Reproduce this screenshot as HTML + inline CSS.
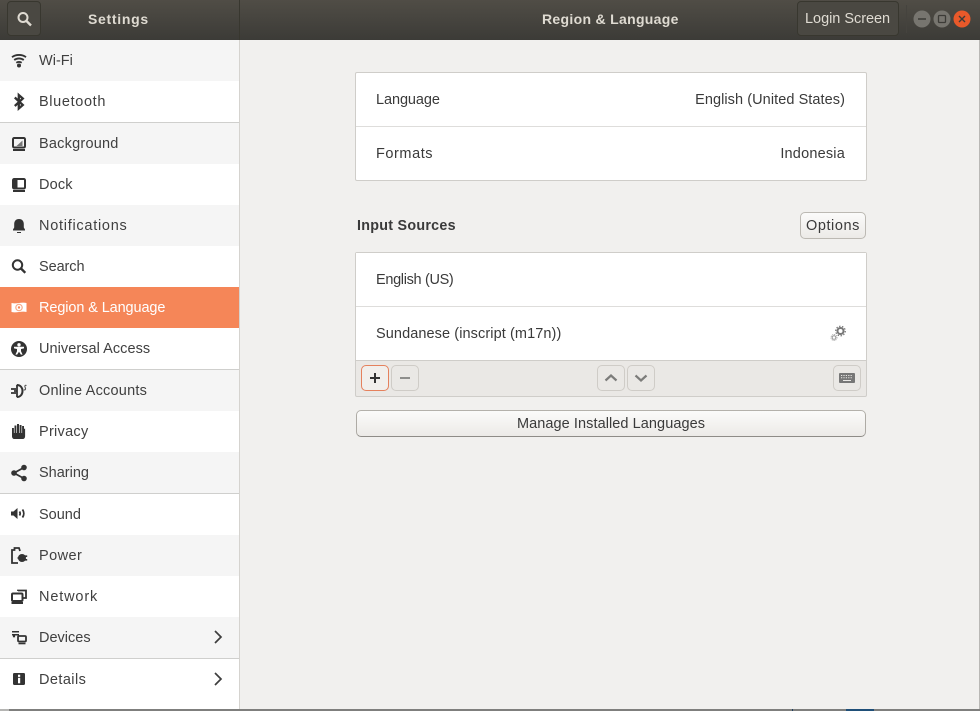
<!DOCTYPE html>
<html><head><meta charset="utf-8"><style>
html,body{margin:0;padding:0;width:980px;height:711px;overflow:hidden;background:#f1f0ee}
*{box-sizing:border-box}
body{font-family:"Liberation Sans",sans-serif;font-size:14.5px;color:#3a3a3a;position:relative}
.a{position:absolute}
.t{position:absolute;white-space:nowrap;line-height:18px}
.hd{position:absolute;left:0;top:0;width:980px;height:40px;background:linear-gradient(#504d46,#3c3b37)}
.r{position:absolute;left:0;width:239px}
.g{background:#f5f5f5}
.r .t{left:39px;top:12px;color:#404040}
.r svg{position:absolute;left:9px;top:11px}
.sep{position:absolute;left:0;width:239px;height:1px;background:#cfcfcd}
.btn{position:absolute;border:1px solid #bcb9b3;border-radius:5px;background:linear-gradient(#fbfbfa,#eceae7)}
.tb{position:absolute;top:365px;height:26px;width:28px;border:1px solid #cfccc7;border-radius:5px;background:#eae8e5}
</style></head><body>
<div class="hd"></div>
<div class="a" style="left:239px;top:0;width:1px;height:40px;background:#38372f"></div>
<div class="a" style="left:7px;top:1px;width:34px;height:35px;border:1px solid #38372f;border-radius:4px;background:#4a4842"></div>
<svg class="a" style="left:16px;top:11px" width="18" height="18" viewBox="0 0 18 18"><circle cx="7" cy="6.500" r="4.500" fill="none" stroke="#dfdbd2" stroke-width="2"/><path d="M10.500 10l4.500 4.500" stroke="#dfdbd2" stroke-width="2.400"/></svg>
<div class="t" style="left:88px;top:10px;color:#dfdbd2;font-weight:bold;letter-spacing:.7px;font-size:14px">Settings</div>
<div class="t" style="left:542px;top:10px;color:#dfdbd2;font-weight:bold;letter-spacing:.31px;font-size:14px">Region &amp; Language</div>
<div class="a" style="left:797px;top:1px;width:102px;height:35px;border:1px solid #38372f;border-radius:4px;background:#4a4842"></div>
<div class="t" style="left:805px;top:10px;color:#dfdbd2;letter-spacing:-.03px">Login Screen</div>
<div class="a" style="left:906px;top:5px;width:1px;height:28px;background:#45433e"></div>
<svg class="a" style="left:912px;top:9px" width="60" height="20" viewBox="0 0 60 20">
<circle cx="10" cy="10" r="8.500" fill="#77756f"/><path d="M6 10h8" stroke="#3c3b37" stroke-width="1.500"/>
<circle cx="30" cy="10" r="8.500" fill="#77756f"/><rect x="26.500" y="6.500" width="7" height="7" rx="1" fill="none" stroke="#3c3b37" stroke-width="1.300"/>
<circle cx="50" cy="10" r="8.500" fill="#e9592a"/><path d="M47 7l6 6M53 7l-6 6" stroke="#3c3b37" stroke-width="1.400"/></svg>

<div class="a" style="left:0;top:40px;width:239px;height:669px;background:#fff"></div>
<div class="a" style="left:239px;top:40px;width:1px;height:669px;background:#d5d3cf"></div>

<div class="r g" style="top:40px;height:41px"><svg width="20" height="20" viewBox="0 0 20 20"><path d="M3 6.200c3.800-3 10.200-3 14 0M5.200 9c2.700-2.100 6.900-2.100 9.600 0M7.300 11.700c1.500-1 3.900-1 5.400 0" fill="none" stroke="#333" stroke-width="1.800"/><circle cx="10" cy="14.500" r="2" fill="#333"/></svg><div class="t" style="letter-spacing:.02px">Wi-Fi</div></div>
<div class="r" style="top:81px;height:41px"><svg width="20" height="20" viewBox="0 0 20 20"><path d="M5.800 5.500l8 7.500-4 3.500V3l4 3.500-8 7.500" fill="none" stroke="#333" stroke-width="2.300"/></svg><div class="t" style="letter-spacing:.64px">Bluetooth</div></div>
<div class="sep" style="top:122px"></div>
<div class="r g" style="top:123px;height:41px"><svg width="20" height="20" viewBox="0 0 20 20"><rect x="4" y="4" width="12" height="9.500" rx="1.200" fill="none" stroke="#333" stroke-width="2"/><path d="M7.500 12h6V6.500z" fill="#777"/><path d="M4 16h12" stroke="#333" stroke-width="2"/></svg><div class="t" style="letter-spacing:.22px">Background</div></div>
<div class="r" style="top:164px;height:41px"><svg width="20" height="20" viewBox="0 0 20 20"><rect x="4" y="4" width="12" height="9.500" rx="1.200" fill="none" stroke="#333" stroke-width="2"/><rect x="5" y="5" width="3.500" height="7.500" fill="#333"/><path d="M4 16h12" stroke="#333" stroke-width="2"/></svg><div class="t" style="letter-spacing:.17px">Dock</div></div>
<div class="r g" style="top:205px;height:41px"><svg width="20" height="20" viewBox="0 0 20 20"><path d="M10 3c3.300 0 4.800 2.400 4.800 5v3.500l1.200 2v1H4v-1l1.200-2V8C5.200 5.400 6.700 3 10 3z" fill="#333"/><path d="M8 16h4v1H8z" fill="#333"/></svg><div class="t" style="letter-spacing:.73px">Notifications</div></div>
<div class="r" style="top:246px;height:41px"><svg width="20" height="20" viewBox="0 0 20 20"><circle cx="8.500" cy="8" r="4.700" fill="none" stroke="#333" stroke-width="2"/><path d="M12 11.500l4.300 4.300" stroke="#333" stroke-width="2.400"/></svg><div class="t" style="letter-spacing:-.08px">Search</div></div>
<div class="r" style="top:287px;height:41px;background:#f58658"><svg width="20" height="20" viewBox="0 0 20 20"><path d="M2.500 5c5 1.200 10-1.200 15 0v9c-5-1.200-10 1.200-15 0z" fill="#fff"/><circle cx="10" cy="9.500" r="3.200" fill="none" stroke="#f7a988" stroke-width="1.200"/><circle cx="10" cy="9.500" r="1.200" fill="#f58658"/></svg><div class="t" style="color:#fff;letter-spacing:-.11px">Region &amp; Language</div></div>
<div class="r" style="top:328px;height:41px"><svg width="20" height="20" viewBox="0 0 20 20"><circle cx="10" cy="10" r="8" fill="#333"/><circle cx="10" cy="5.800" r="1.700" fill="#fff"/><path d="M5 7.800h10v1.600l-3 .6v2.200l1.600 3.400h-1.700L10 12.800l-1.900 2.800H6.400L8 12.200V10l-3-.6z" fill="#fff"/></svg><div class="t" style="letter-spacing:.05px">Universal Access</div></div>
<div class="sep" style="top:369px"></div>
<div class="r g" style="top:370px;height:41px"><svg width="20" height="20" viewBox="0 0 20 20"><path d="M2 8h5M2 12h5M5 10h3" stroke="#333" stroke-width="1.700"/><path d="M7.800 4c3.700 0 5.700 2.700 5.700 6s-2 6-5.700 6" fill="none" stroke="#333" stroke-width="2"/><path d="M8 4v12" stroke="#333" stroke-width="1.800"/><path d="M17.500 4.500c-1.500-.6-2 .5-1.500 1.500s1 1.800.2 2.700c-.5.400-1 .2-1.400 0" fill="none" stroke="#555" stroke-width="1.100"/></svg><div class="t" style="letter-spacing:.22px">Online Accounts</div></div>
<div class="r" style="top:411px;height:41px"><svg width="20" height="20" viewBox="0 0 20 20"><path d="M3 6h1.900v5h.6V3.500h1.900V11H8V2h2v9h.6V3h1.900v8h.6V4h1.900v3l1.100-.5V14c0 2-1 3-2.500 3H5.500C4 17 3 16 3 14z" fill="#333"/></svg><div class="t" style="letter-spacing:.28px">Privacy</div></div>
<div class="r g" style="top:452px;height:41px"><svg width="20" height="20" viewBox="0 0 20 20"><path d="M15 4.500L5 10l10 5.500" fill="none" stroke="#333" stroke-width="1.800"/><circle cx="15" cy="4.500" r="2.800" fill="#333"/><circle cx="5" cy="10" r="2.800" fill="#333"/><circle cx="15" cy="15.500" r="2.800" fill="#333"/></svg><div class="t" style="letter-spacing:0">Sharing</div></div>
<div class="sep" style="top:493px"></div>
<div class="r" style="top:494px;height:41px"><svg width="20" height="20" viewBox="0 0 20 20"><path d="M2 6.500h2.500L8.500 3v11l-4-3.500H2z" fill="#333"/><path d="M10.500 6.500c.8 1.200.8 2.800 0 4M13.500 4.500c1.700 2.400 1.700 5.600 0 8" fill="none" stroke="#333" stroke-width="1.800"/></svg><div class="t" style="letter-spacing:0">Sound</div></div>
<div class="r g" style="top:535px;height:41px"><svg width="20" height="20" viewBox="0 0 20 20"><path d="M9 17H3V4h2.500V2h4.500l1 3" fill="none" stroke="#333" stroke-width="1.800"/><circle cx="13" cy="12" r="4" fill="#333"/><path d="M8.500 12h2M16 10.200h2.200M16 13.800h2.200" stroke="#333" stroke-width="1.600"/></svg><div class="t" style="letter-spacing:.42px">Power</div></div>
<div class="r" style="top:576px;height:41px"><svg width="20" height="20" viewBox="0 0 20 20"><rect x="3" y="6.500" width="10.500" height="7.500" rx="1" fill="none" stroke="#333" stroke-width="2"/><path d="M2.500 16h11.500" stroke="#333" stroke-width="2"/><path d="M9 4V3.500h8V11h-2.500" fill="none" stroke="#333" stroke-width="1.800"/></svg><div class="t" style="letter-spacing:.85px">Network</div></div>
<div class="r g" style="top:617px;height:41px"><svg width="20" height="20" viewBox="0 0 20 20"><path d="M3 3.800h7M3 6.800h7" stroke="#333" stroke-width="1.500"/><path d="M5 6.800v2.500" stroke="#333" stroke-width="2.200"/><rect x="9" y="8" width="8" height="5.500" rx="1" fill="none" stroke="#333" stroke-width="1.800"/><path d="M9.500 15.500h7" stroke="#333" stroke-width="1.600"/></svg><div class="t" style="letter-spacing:0">Devices</div><svg style="left:211px;top:12px" width="14" height="16" viewBox="0 0 14 16"><path d="M4 2l6 6-6 6" fill="none" stroke="#3d3d3d" stroke-width="1.700"/></svg></div>
<div class="sep" style="top:658px"></div>
<div class="r" style="top:659px;height:41px"><svg width="20" height="20" viewBox="0 0 20 20"><rect x="4" y="3" width="12" height="12" rx="1.200" fill="#333"/><rect x="9" y="4.700" width="2.200" height="2.200" fill="#fff"/><rect x="9" y="7.800" width="2.200" height="5.500" fill="#fff"/></svg><div class="t" style="letter-spacing:.42px">Details</div><svg style="left:211px;top:12px" width="14" height="16" viewBox="0 0 14 16"><path d="M4 2l6 6-6 6" fill="none" stroke="#3d3d3d" stroke-width="1.700"/></svg></div>

<div class="a" style="left:0;top:709px;width:980px;height:2px;background:#7f7f7d"></div>
<div class="a" style="left:0;top:709px;width:9px;height:2px;background:#b5b5b3"></div>
<div class="a" style="left:792px;top:709px;width:1px;height:2px;background:#1f3f5f"></div>
<div class="a" style="left:846px;top:709px;width:28px;height:2px;background:#1f4f78"></div>
<div class="a" style="left:979px;top:40px;width:1px;height:669px;background:#b9b8b5"></div>

<div class="a" style="left:355px;top:72px;width:512px;height:109px;background:#fff;border:1px solid #cfcdc9;border-radius:2px"></div>
<div class="a" style="left:356px;top:126px;width:510px;height:1px;background:#dedddb"></div>
<div class="t" style="left:376px;top:91px;letter-spacing:-.08px">Language</div>
<div class="t" style="right:135px;top:91px;letter-spacing:.07px">English (United States)</div>
<div class="t" style="left:376px;top:145px;letter-spacing:.56px">Formats</div>
<div class="t" style="right:135px;top:145px;letter-spacing:.2px">Indonesia</div>

<div class="t" style="left:357px;top:217px;font-weight:bold;letter-spacing:.27px;font-size:14.300px">Input Sources</div>
<div class="btn" style="left:800px;top:212px;width:66px;height:27px"></div>
<div class="t" style="left:806px;top:217px;letter-spacing:.56px">Options</div>

<div class="a" style="left:355px;top:252px;width:512px;height:145px;background:#eae8e5;border:1px solid #cfcdc9;border-radius:2px"></div>
<div class="a" style="left:356px;top:253px;width:510px;height:107px;background:#fff"></div>
<div class="a" style="left:356px;top:306px;width:510px;height:1px;background:#dedddb"></div>
<div class="a" style="left:356px;top:360px;width:510px;height:1px;background:#cfcdc9"></div>
<div class="t" style="left:376px;top:271px;letter-spacing:-.33px">English (US)</div>
<div class="t" style="left:376px;top:325px;letter-spacing:.09px">Sundanese (inscript (m17n))</div>
<svg class="a" style="left:830px;top:325px" width="17" height="17" viewBox="0 0 17 17"><circle cx="10.500" cy="6" r="3" fill="none" stroke="#777" stroke-width="2"/><circle cx="10.500" cy="6" r="4.800" fill="none" stroke="#777" stroke-width="1.200" stroke-dasharray="1.500 1.500"/><circle cx="4" cy="12.500" r="1.800" fill="none" stroke="#999" stroke-width="1"/><circle cx="4" cy="12.500" r="3" fill="none" stroke="#999" stroke-width=".9" stroke-dasharray="1 1"/></svg>

<div class="tb" style="left:361px;border-color:#e5815d;background:#f1efec"></div>
<svg class="a" style="left:368px;top:371px" width="14" height="14"><path d="M2 7h10M7 2v10" stroke="#333" stroke-width="2"/></svg>
<div class="tb" style="left:391px"></div>
<svg class="a" style="left:398px;top:371px" width="14" height="14"><path d="M2 7h10" stroke="#8e8e8c" stroke-width="2"/></svg>
<div class="tb" style="left:597px"></div>
<svg class="a" style="left:604px;top:371px" width="14" height="14"><path d="M1.500 9.500L7 4.500l5.500 5" fill="none" stroke="#7c7c7a" stroke-width="2.200"/></svg>
<div class="tb" style="left:627px"></div>
<svg class="a" style="left:634px;top:371px" width="14" height="14"><path d="M1.500 4.500L7 9.500l5.500-5" fill="none" stroke="#7c7c7a" stroke-width="2.200"/></svg>
<div class="tb" style="left:833px"></div>
<svg class="a" style="left:839px;top:371px" width="16" height="14"><rect x="0" y="2" width="16" height="10" rx="1" fill="#777"/><path d="M2 4.500h12M2 6.800h12" stroke="#eae8e5" stroke-width="1" stroke-dasharray="1.200 1.200"/><path d="M4 9.500h8" stroke="#eae8e5" stroke-width="1"/></svg>

<div class="btn" style="left:356px;top:410px;width:510px;height:27px;border-color:#b4b1ab #aeaba5 #8e8c87"></div>
<div class="t" style="left:517px;top:415px;letter-spacing:.07px">Manage Installed Languages</div>
</body></html>
